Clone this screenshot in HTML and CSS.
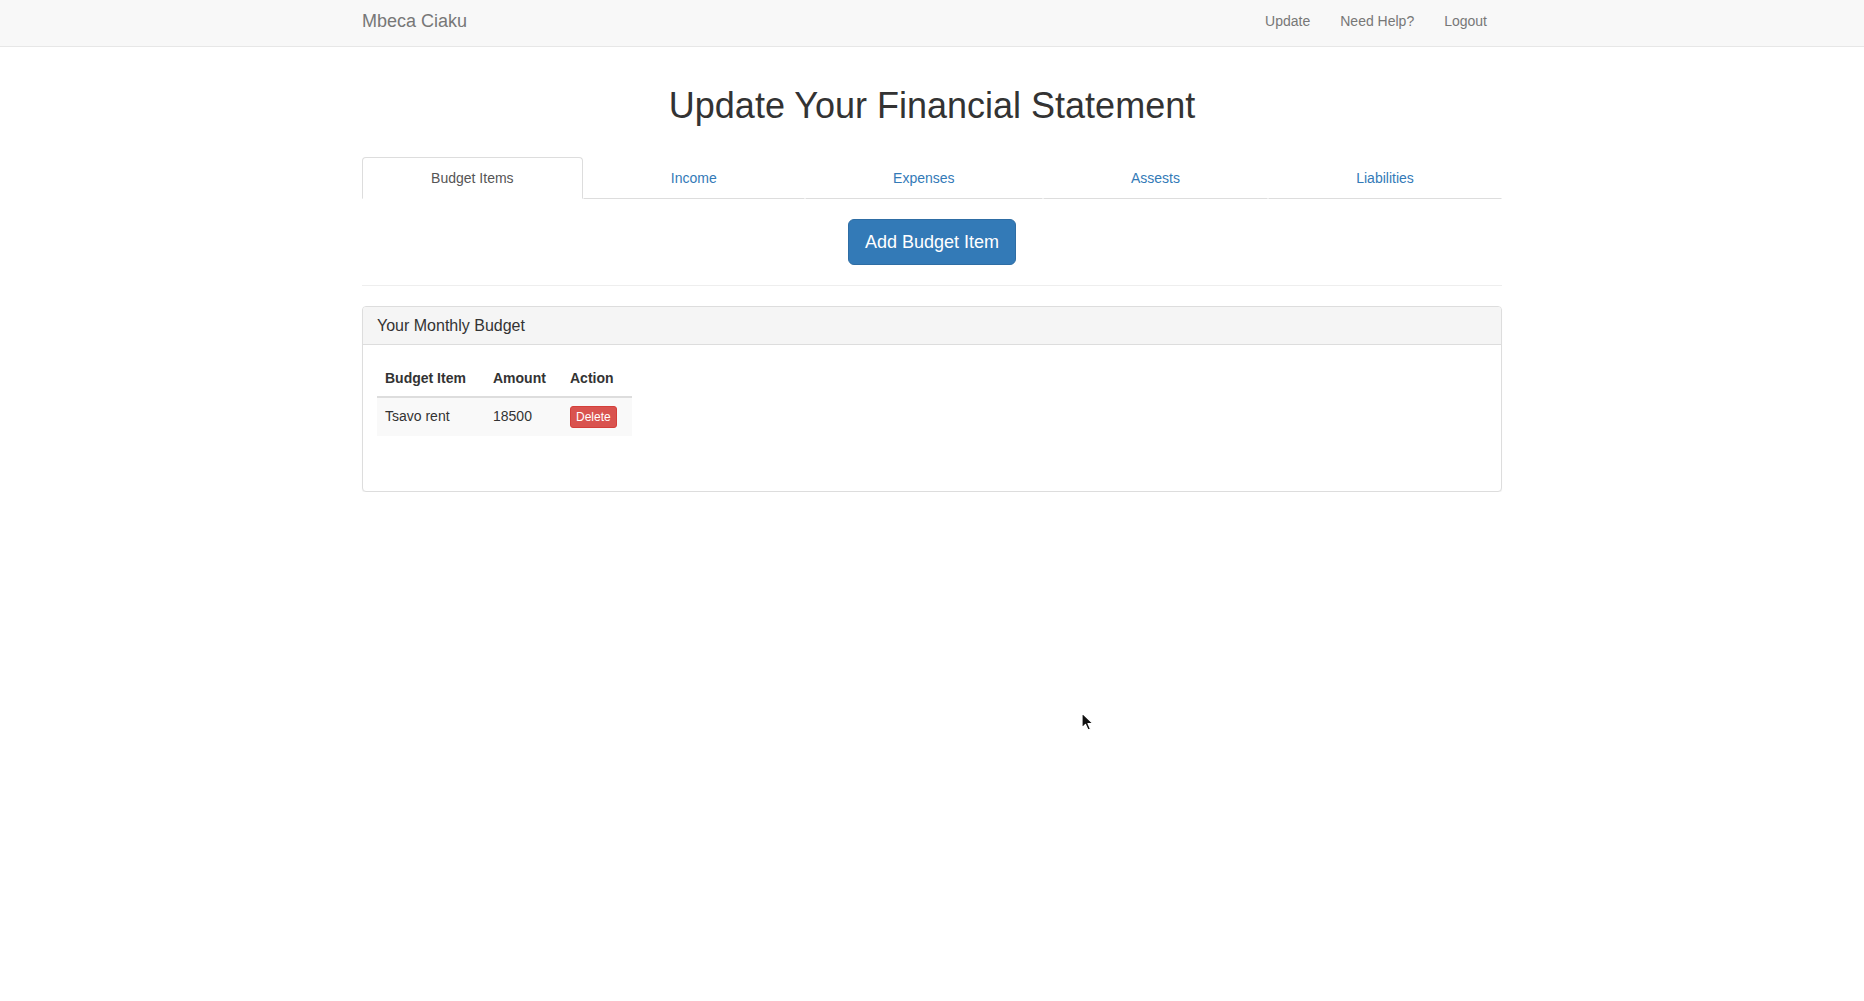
FILE: index.html
```html
<!DOCTYPE html>
<html lang="en">
<head>
<meta charset="utf-8">
<title>Update Your Financial Statement</title>
<link rel="stylesheet" href="styles.css">
</head>
<body>
<nav class="navbar">
  <div class="container navbar-inner">
    <a class="brand" href="#">Mbeca Ciaku</a>
    <ul class="nav-links">
      <li><a href="#">Update</a></li>
      <li><a href="#">Need Help?</a></li>
      <li><a href="#">Logout</a></li>
    </ul>
  </div>
</nav>

<main class="container">
  <h1 class="title">Update Your Financial Statement</h1>

  <ul class="tabs">
    <li class="tab active"><a href="#">Budget Items</a></li>
    <li class="tab"><a href="#">Income</a></li>
    <li class="tab"><a href="#">Expenses</a></li>
    <li class="tab"><a href="#">Assests</a></li>
    <li class="tab"><a href="#">Liabilities</a></li>
  </ul>

  <div class="tab-content">
    <div class="actions">
      <button class="btn btn-primary btn-lg" type="button">Add Budget Item</button>
    </div>
    <hr class="divider">

    <div class="panel">
      <div class="panel-heading">Your Monthly Budget</div>
      <div class="panel-body">
        <table class="table">
          <thead>
            <tr>
              <th class="col-item">Budget Item</th>
              <th class="col-amount">Amount</th>
              <th class="col-action">Action</th>
            </tr>
          </thead>
          <tbody>
            <tr>
              <td>Tsavo rent</td>
              <td>18500</td>
              <td><button class="btn btn-danger btn-xs" type="button">Delete</button></td>
            </tr>
          </tbody>
        </table>
      </div>
    </div>
  </div>
</main>

<svg class="cursor" width="14" height="20" viewBox="0 0 14 20" aria-hidden="true">
  <path d="M1 1 L1 16 L4.5 12.5 L7 18 L9.5 17 L7 11.5 L12 11.5 Z" fill="#111" stroke="#fff" stroke-width="1.2" stroke-linejoin="round"/>
</svg>
</body>
</html>
```

FILE: styles.css
```css
* {
  box-sizing: border-box;
}

html, body {
  margin: 0;
  padding: 0;
}

body {
  font-family: "Liberation Sans", Arial, Helvetica, sans-serif;
  font-size: 14px;
  line-height: 20px;
  color: #333;
  background: #fff;
}

a {
  text-decoration: none;
}

.container {
  width: 1170px;
  margin: 0 auto;
  padding: 0 15px;
}

/* Navbar */
.navbar {
  background: #f8f8f8;
  border-bottom: 1px solid #e7e7e7;
}

.navbar-inner {
  display: flex;
  justify-content: space-between;
  height: 46px;
}

.brand {
  font-size: 18px;
  line-height: 20px;
  color: #777;
  padding-top: 11px;
}

.nav-links {
  list-style: none;
  margin: 0;
  padding: 0;
  display: flex;
}

.nav-links a {
  display: block;
  color: #777;
  padding: 11px 15px 0;
  line-height: 20px;
}

/* Title */
.title {
  margin: 39px 0 31px;
  font-size: 36px;
  line-height: 1.1;
  font-weight: 500;
  text-align: center;
  color: #333;
}

/* Tabs */
.tabs {
  list-style: none;
  margin: 0;
  padding: 0;
  display: table;
  width: 100%;
  table-layout: auto;
}

.tab {
  display: table-cell;
  width: 1%;
}

.tab a {
  display: block;
  text-align: center;
  padding: 10px 15px;
  line-height: 20px;
  color: #337ab7;
  border: 1px solid transparent;
  border-bottom: 1px solid #ddd;
  border-radius: 4px 4px 0 0;
}

.tab.active a {
  color: #555;
  background: #fff;
  border: 1px solid #ddd;
  border-bottom-color: transparent;
}

.tab-content {
  padding-top: 20px;
}

.actions {
  display: flex;
  justify-content: center;
}

/* Buttons */
.btn {
  font-family: inherit;
  display: inline-block;
  border: 1px solid transparent;
  cursor: pointer;
  white-space: nowrap;
}

.btn-lg {
  font-size: 18px;
  line-height: 24px;
  padding: 10px 16px;
  border-radius: 6px;
}

.btn-primary {
  color: #fff;
  background: #337ab7;
  border-color: #2e6da4;
}

.btn-xs {
  font-size: 12px;
  line-height: 18px;
  padding: 1px 5px;
  border-radius: 3px;
}

.btn-danger {
  color: #fff;
  background: #d9534f;
  border-color: #d43f3a;
}

.divider {
  margin: 20px 0;
  border: 0;
  border-top: 1px solid #eee;
}

/* Panel */
.panel {
  border: 1px solid #ddd;
  border-radius: 4px;
  background: #fff;
  box-shadow: 0 1px 1px rgba(0, 0, 0, 0.05);
}

.panel-heading {
  background: #f5f5f5;
  border-bottom: 1px solid #ddd;
  border-radius: 3px 3px 0 0;
  padding: 10px 14px;
  font-size: 16px;
  line-height: 17.6px;
  color: #333;
}

.panel-body {
  padding: 15px 14px 35px;
}

/* Table */
.table {
  border-collapse: collapse;
  border-spacing: 0;
  margin-bottom: 20px;
  width: 255px;
}

.table th,
.table td {
  padding: 8px;
  text-align: left;
  vertical-align: top;
  line-height: 20px;
  white-space: nowrap;
}

.table th {
  font-weight: bold;
  border-bottom: 2px solid #ddd;
  vertical-align: bottom;
}

.table td {
  border-top: 1px solid #ddd;
  background: #f9f9f9;
}

.col-item {
  width: 108px;
}

.col-amount {
  width: 77px;
}

.col-action {
  width: 70px;
}

/* Pointer shown over the page */
.cursor {
  position: absolute;
  left: 1081px;
  top: 712px;
}
```
